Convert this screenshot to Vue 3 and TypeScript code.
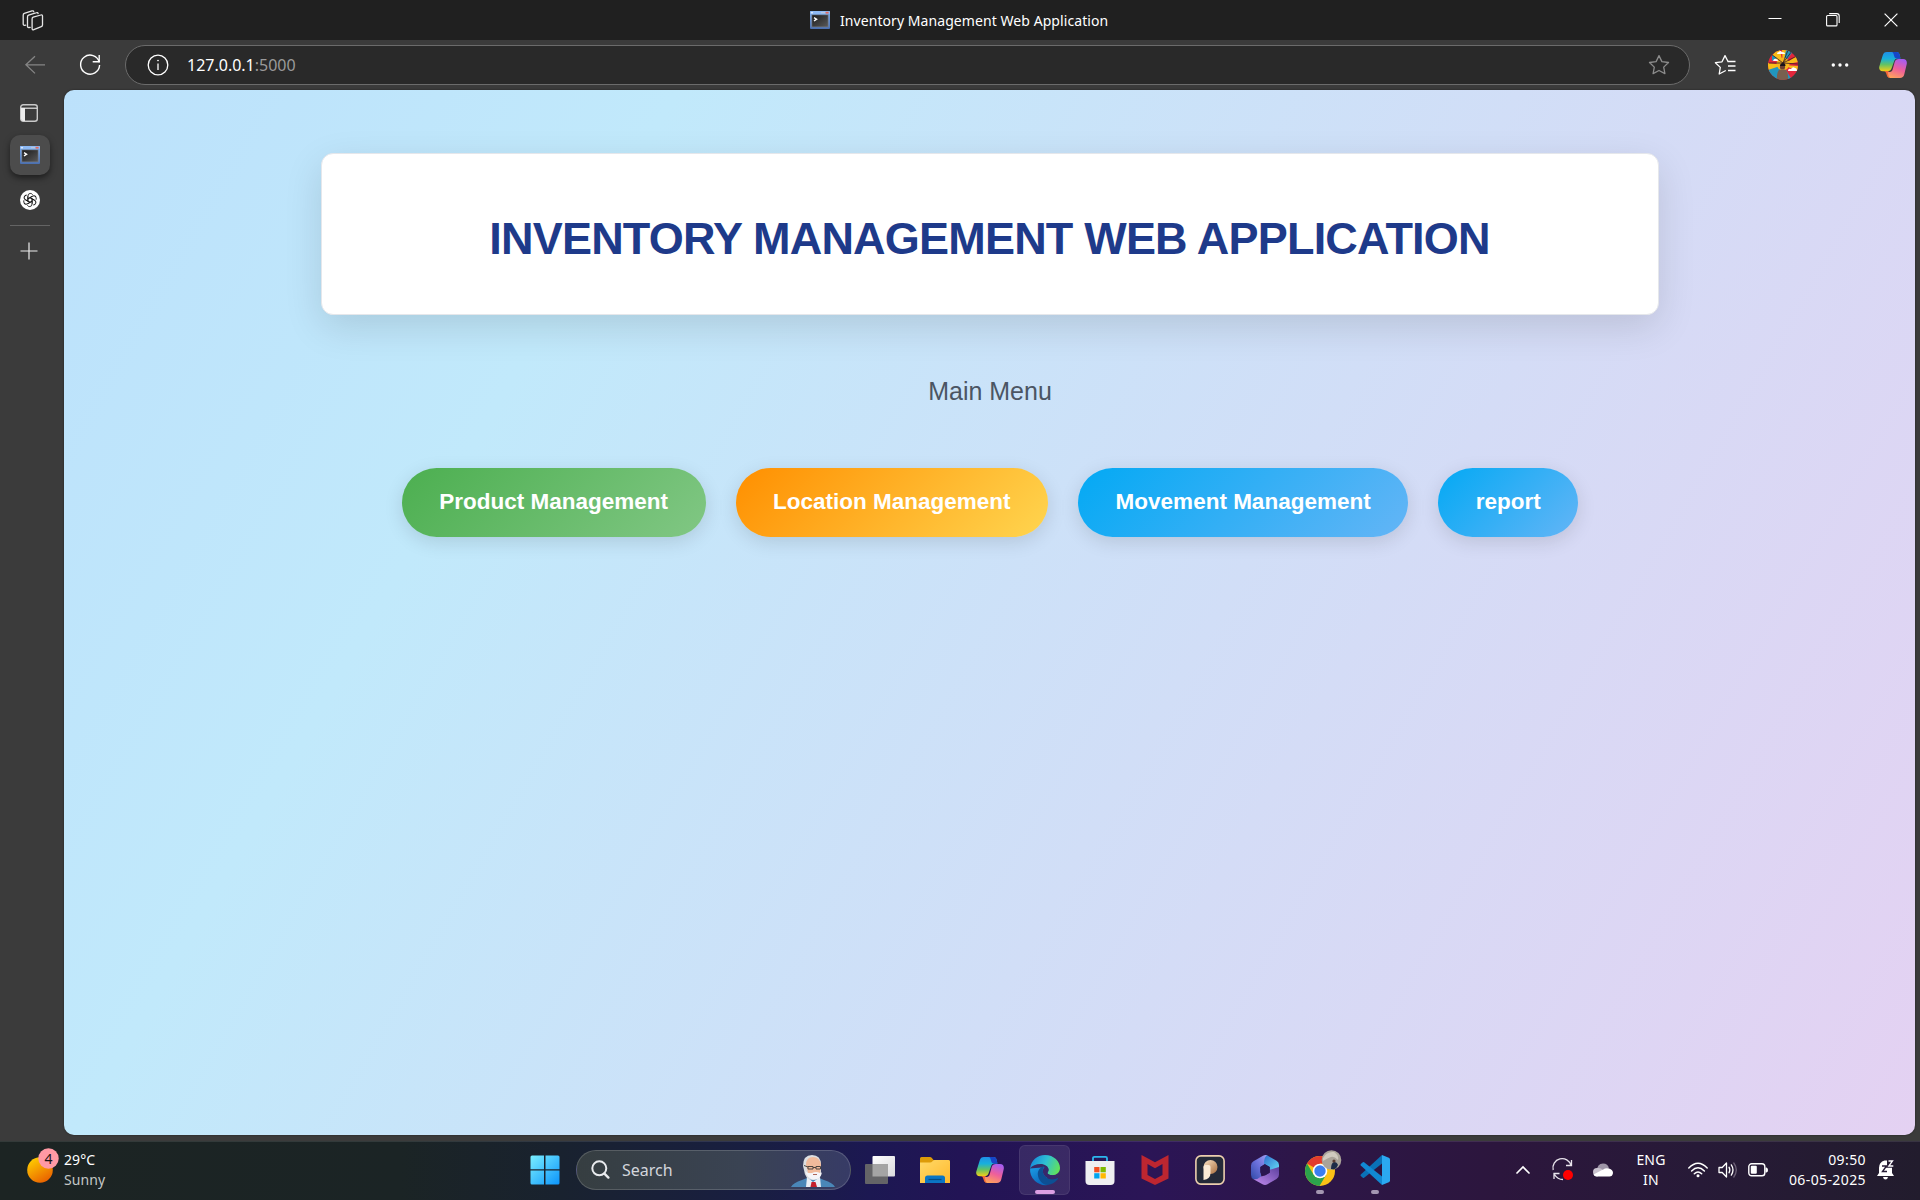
<script setup lang="ts">
interface MenuItem {
  label: string
  tone: string
}

const menu: MenuItem[] = [
  { label: 'Product Management', tone: 'green' },
  { label: 'Location Management', tone: 'orange' },
  { label: 'Movement Management', tone: 'blue' },
  { label: 'report', tone: 'blue' },
]
</script>

<template>
  <div class="desktop">
    <svg class="defs" width="0" height="0" aria-hidden="true">
      <defs>
        <linearGradient id="copA" x1="0" y1="0" x2="0" y2="1">
          <stop offset="0" stop-color="#1f8fe8" /><stop offset=".35" stop-color="#18b0dc" />
          <stop offset=".65" stop-color="#62c266" /><stop offset="1" stop-color="#f4cf16" />
        </linearGradient>
        <linearGradient id="copB" x1=".7" y1="0" x2=".3" y2="1">
          <stop offset="0" stop-color="#a65cf0" /><stop offset=".5" stop-color="#ee5f9b" />
          <stop offset="1" stop-color="#ffa35c" />
        </linearGradient>
        <linearGradient id="winFrame" x1="0" y1="0" x2="0" y2="1">
          <stop offset="0" stop-color="#7fb0ee" /><stop offset="1" stop-color="#4a6fb0" />
        </linearGradient>
        <linearGradient id="winBody" x1="0" y1="0" x2="1" y2="1">
          <stop offset="0" stop-color="#1c1c1c" /><stop offset="1" stop-color="#585858" />
        </linearGradient>
        <symbol id="console" viewBox="0 0 20 18">
          <rect width="20" height="18" rx="1" fill="url(#winFrame)" />
          <rect x="0" y="0" width="20" height="3" rx="1" fill="#8db9f4" />
          <rect x="1" y="1" width="2" height="1.4" fill="#dbe9fb" />
          <rect x="11" y="1" width="4" height="1.2" fill="#b9c6dd" />
          <rect x="15.6" y=".8" width="3" height="1.8" fill="#e2695c" />
          <rect x="1.5" y="3.6" width="17" height="12.6" fill="#777c85" />
          <rect x="2.2" y="4.2" width="15.6" height="11.4" fill="url(#winBody)" />
          <path d="M4 6.6l2.6 1.6L4 10" fill="none" stroke="#fff" stroke-width="1.4" />
        </symbol>
        <symbol id="copilot" viewBox="0 0 28 26">
          <path d="M8 0h9.500c2 0 2.700 1 3.200 3l.7 3.500h-3.200c-1.700 0-2.500.9-3 2.500L12.700 16c-.8 2.200-2 3.200-4.500 3.200H4C.8 19.200-.3 17 .3 14.500L3.700 3.500C4.500 1 5.500 0 8 0z" fill="url(#copA)" />
          <path d="M12.500 0h5c2 0 2.700 1 3.200 3l.8 3.600h-3.300c-2.300 0-2.700-1-3.200-3C14.700 1.600 14 .2 12.500 0z" fill="#1746c8" />
          <path d="M20 7h4c3.200 0 4.300 2.400 3.700 5.200l-2.400 10c-.6 2.500-2 3.800-4.500 3.800h-9.500c-1.800 0-2.500-1-3-2.500L7.500 20h3.200c1.700 0 2.500-1 3-2.700l2-7.300C16.300 8 17.500 7 20 7z" fill="url(#copB)" />
          <path d="M5 19h5.500c-1.300.3-1.700 1.400-1.400 2.900.4 2.200 1 3.800 2.600 4.100-2.200 0-3.400-1-4-3-.5-2-1-3.600-2.700-4z" fill="#f56a35" />
        </symbol>
      </defs>
    </svg>

    <header class="titlebar">
      <svg class="spaces" width="22" height="22" viewBox="0 0 22 22" fill="none" stroke="#e6e6e6" stroke-width="1.300" stroke-linejoin="round" stroke-linecap="round">
        <path d="M11.200 7.200l7.700-2.200c1-.3 1.600.1 1.600 1.100v9c0 .9-.3 1.300-1.200 1.600l-7.500 3c-1 .4-1.700-.1-1.700-1.100V9c0-1 .2-1.500 1.100-1.800z" />
        <path d="M8.200 17.300l-1.200.2c-1 .2-1.500-.3-1.500-1.300V7c0-1 .2-1.500 1.100-1.800L14.500 2.700c.8-.3 1.400 0 1.600.8" />
        <path d="M3.700 15.200l-1 .1c-1 .1-1.500-.4-1.500-1.300V5.200c0-.9.200-1.500 1.100-1.800L10 .9c.9-.3 1.500 0 1.700.8" />
      </svg>
      <div class="tabtitle">
        <svg width="20" height="18"><use href="#console" /></svg>
        <span>Inventory Management Web Application</span>
      </div>
      <div class="winctl">
        <svg width="14" height="14" viewBox="0 0 14 14" stroke="#fff" fill="none"><path d="M.5 5.500h13" /></svg>
        <svg width="14" height="14" viewBox="0 0 14 14" stroke="#fff" stroke-width="1.100" fill="none"><rect x=".6" y="2.500" width="10.400" height="10.400" rx="1" /><path d="M3.200 .6h7.600c1.600 0 2.400.8 2.400 2.400v7" /></svg>
        <svg width="14" height="14" viewBox="0 0 14 14" stroke="#fff" stroke-width="1.200"><path d="M.6.600l12.800 12.800M13.400.600L.600 13.400" /></svg>
      </div>
    </header>

    <div class="toolbar">
      <svg class="back" width="20" height="20" viewBox="0 0 20 20" stroke="#858585" stroke-width="1.300" fill="none"><path d="M20 9.800H.9M10 1.200L.9 9.800l9.100 8.600" /></svg>
      <svg class="reload" width="22" height="22" viewBox="0 0 22 22" stroke="#fff" stroke-width="1.400" fill="none"><path d="M20.300 8.200A9.500 9.500 0 1 0 20.600 11" /><path d="M20.200 1v6.700h-6.500" /></svg>
      <div class="address">
        <svg width="22" height="22" viewBox="0 0 22 22" stroke="#fff" stroke-width="1.300" fill="none"><circle cx="11" cy="11" r="9.800" /><path d="M11 9.500v6.500" /><circle cx="11" cy="6.600" r=".5" fill="#fff" stroke-width=".8" /></svg>
        <span class="url"><b>127.0.0.1</b>:5000</span>
        <svg class="star" width="22" height="22" viewBox="0 0 22 22" stroke="#8c8c8c" stroke-width="1.300" fill="none" stroke-linejoin="round"><path d="M11 1.600l2.900 6 6.600.9-4.800 4.600 1.200 6.500L11 16.500l-5.900 3.100 1.200-6.500L1.500 8.500l6.600-.9z" /></svg>
      </div>
      <div class="tools">
        <svg width="22" height="22" viewBox="0 0 22 22" stroke="#fff" stroke-width="1.300" fill="none" stroke-linejoin="round"><path d="M11.800 16.500L5.200 20l1.100-6.600L1.400 8.700l6.600-.9 3-6.200 3 5.900" /><path d="M13.500 7.500h8M14 12h7.500M14 16.500h7.500" /></svg>
        <svg width="30" height="30" viewBox="0 0 30 30">
          <clipPath id="av"><circle cx="15" cy="15" r="15" /></clipPath>
          <g clip-path="url(#av)">
            <rect width="30" height="30" fill="#e2263c" />
            <path d="M15 15L4 6l4-6h4zM15 15L14 0h6zM15 15L30 5v7zM15 15L0 13v9zM15 15l15 1v5z" fill="#f8bd18" />
            <path d="M15 15L18 0h8zM15 15L0 20v10h9zM15 15l9 15h-4z" fill="#2196bf" />
            <path d="M4 5l5 3-5 3z" fill="#2196bf" />
            <circle cx="15" cy="14" r="6.500" fill="#f6b61d" />
            <path d="M15 13L3 4M15 13L20 0M15 13L24 1M15 13l14-7M15 13L1 13M15 13l15 1" stroke="#361c25" stroke-width=".8" />
            <path d="M9 4q0-2 2-2 1-2 3 0 3 0 3 2zM20 21q0-3 3-2 2-3 4-1 2 0 2 3zM5 11q1-3 3-2 2 0 2 2z" fill="#fff" />
            <circle cx="14.500" cy="17" r="2.600" fill="#6e4030" /><path d="M12 16q0-3 3-3 2.500 0 2.500 3z" fill="#17121a" />
            <path d="M9 30q-.5-9 3-10.500h5q3.500 1.500 3 10.500z" fill="#79604f" />
          </g>
        </svg>
        <svg width="18" height="6" viewBox="0 0 18 6" fill="#fff"><circle cx="2.300" cy="3" r="1.700" /><circle cx="9" cy="3" r="1.700" /><circle cx="15.700" cy="3" r="1.700" /></svg>
        <svg width="28" height="26"><use href="#copilot" /></svg>
      </div>
    </div>

    <div class="body">
      <aside class="side">
        <svg width="18" height="18" viewBox="0 0 18 18" class="panes"><rect x=".7" y=".7" width="16.600" height="16.600" rx="2.500" fill="none" stroke="#c9c9c9" stroke-width="1.400" /><path d="M1 4.200h16" stroke="#e6e6e6" stroke-width="1.200" /><path d="M1 4h4v13H3q-2 0-2-2z" fill="#ececec" /></svg>
        <div class="active"><svg width="20" height="18"><use href="#console" /></svg></div>
        <svg class="gpt" width="20" height="20" viewBox="0 0 20 20">
          <circle cx="10" cy="10" r="10" fill="#fff" />
          <g fill="none" stroke="#151515" stroke-width=".9" stroke-linejoin="round">
            <path v-for="n in 6" :key="n" :transform="`rotate(${n * 60} 10 10)`" d="M7.900 11.200V6.200q0-2.600 2.300-2.800 1.600 0 2.500 1.300M7.900 8.800L12.200 6.300" />
          </g>
        </svg>
        <div class="rule"></div>
        <svg class="plus" width="18" height="18" viewBox="0 0 18 18" stroke="#ededed" stroke-width="1.200"><path d="M9 .5v17M.5 9h17" /></svg>
      </aside>

      <main class="page">
        <section class="card"><h1>INVENTORY MANAGEMENT WEB APPLICATION</h1></section>
        <p class="sub">Main Menu</p>
        <nav class="menu">
          <a v-for="m in menu" :key="m.label" :class="['btn', m.tone]">{{ m.label }}</a>
        </nav>
      </main>
    </div>

    <footer class="taskbar">
      <div class="weather">
        <svg width="34" height="36" viewBox="0 0 34 36">
          <defs><linearGradient id="sun" x1=".2" y1="0" x2=".8" y2="1"><stop offset="0" stop-color="#ffd000" /><stop offset="1" stop-color="#e85a00" /></linearGradient></defs>
          <circle cx="14" cy="22" r="12.800" fill="url(#sun)" />
          <circle cx="22.500" cy="10.500" r="10.200" fill="#ff99a4" />
          <text x="22.500" y="15.600" text-anchor="middle" font-family="Noto Sans, sans-serif" font-size="14" fill="#1a1414">4</text>
        </svg>
        <div class="wtext"><span>29°C</span><span class="dim">Sunny</span></div>
      </div>

      <div class="apps">
        <div class="cell">
          <svg width="30" height="30" viewBox="0 0 30 30">
            <defs><linearGradient id="win" x1="0" y1="0" x2="30" y2="30" gradientUnits="userSpaceOnUse"><stop offset="0" stop-color="#7cf0ff" /><stop offset="1" stop-color="#0a93fb" /></linearGradient></defs>
            <path d="M2 .5h12v13.700H.500V2Q.500.500 2 .500zM15.500.500H28q1.500 0 1.500 1.500v12.200h-14zM.500 15.600H14v13.900H2Q.500 29.500.500 28zM15.500 15.600h14V28q0 1.500-1.500 1.500H15.500z" fill="url(#win)" />
          </svg>
        </div>
        <div class="search">
          <svg width="20" height="20" viewBox="0 0 20 20" fill="none" stroke="#e9ebee" stroke-width="2" stroke-linecap="round"><circle cx="8.300" cy="8.300" r="7" /><path d="M13.400 13.600l4 4" stroke-width="2.400" /></svg>
          <span>Search</span>
          <svg class="man" width="44" height="34" viewBox="0 0 44 34">
            <path d="M0 33q2-4 11-7l5-2h12l5 2q9 3 11 7z" fill="#4a87b8" />
            <path d="M16 23l6 5 7-5 1 10H15z" fill="#e9eef5" /><path d="M20.500 28h4l1.500 5h-6.500z" fill="#c5202c" />
            <path d="M12 12Q12 1 21 1t9 10v8q0 7-8 7t-9-10z" fill="#dcdfe2" />
            <path d="M15 11q0-8 7-8t8 8l-1 8h-12z" fill="#f0ba9b" />
            <path d="M14 17q3 3 7 2 4-2 8 0 2 0 2-1-1 7.500-8 7.500-6 0-9-8.500z" fill="#f6f5f8" />
            <path d="M17 12.500h5v2.500h-5zM25 12.500h4.500v2.500H25zM13 11.500l4 1.500M22 13.500h3" fill="none" stroke="#4b4440" stroke-width="1" /><path d="M22 20.500h4" stroke="#ad6658" />
          </svg>
        </div>
        <div class="cell">
          <svg width="32" height="30" viewBox="0 0 32 30">
            <defs><linearGradient id="tv" x1="0" y1="0" x2="1" y2="1"><stop offset="0" stop-color="#fff" /><stop offset="1" stop-color="#d9d9dc" /></linearGradient></defs>
            <rect x="8.500" y="1" width="22.500" height="20.500" rx="1" fill="url(#tv)" /><rect x="1" y="9" width="23" height="20" rx="1" fill="#646467" /><rect x="8.500" y="9" width="15.500" height="12.500" fill="#a4a4a4" />
          </svg>
        </div>
        <div class="cell">
          <svg width="30" height="30" viewBox="0 0 30 30">
            <defs><linearGradient id="fold" x1="0" y1="0" x2="1" y2="1"><stop offset="0" stop-color="#ffd968" /><stop offset="1" stop-color="#ffb92d" /></linearGradient></defs>
            <path d="M0 3.500Q0 2 1.500 2H10q1 0 1.700.8L13.500 5H28.500Q30 5 30 6.500V12H0z" fill="#dd9b08" />
            <path d="M0 7.500h10q1.500 0 2.500-1.200T15 5h13.500Q30 5 30 6.500V28H0z" fill="url(#fold)" />
            <path d="M5 28v-5q0-2.500 2.500-2.500h15q2.500 0 2.500 2.500v5z" fill="#0b75c4" /><path d="M8.500 24.500h13" stroke="#064d85" stroke-width="1.200" />
          </svg>
        </div>
        <div class="cell"><svg width="28" height="26"><use href="#copilot" /></svg></div>
        <div class="cell current">
          <svg width="30" height="30" viewBox="0 0 30 30">
            <defs>
              <linearGradient id="edA" x1="0" y1=".3" x2="1" y2=".6"><stop offset="0" stop-color="#1689dc" /><stop offset=".5" stop-color="#2fc0d2" /><stop offset="1" stop-color="#62e25a" /></linearGradient>
              <linearGradient id="edB" x1="0" y1="0" x2=".6" y2="1"><stop offset="0" stop-color="#1c9de6" /><stop offset="1" stop-color="#0b66b9" /></linearGradient>
            </defs>
            <path d="M.1 13.500Q-.5 21 5 26q5.500 5 12.500 4V12z" fill="url(#edB)" />
            <path d="M.1 13.500C1 5.500 7 0 15 0c9 0 15 6.500 15 13 0 4.500-3.500 7.200-7.500 7.200-3.300 0-5-1-5-2.200 0-.8 1-1.300 1-3.300 0-3-3.500-5.700-8-5.700-4.700 0-8.500 1.700-10.400 4.500z" fill="url(#edA)" />
            <path d="M14.500 11C10 12 7.500 16 7.800 19.500 8.200 25 12.500 29.500 17.500 30c4.500-.5 8.500-3 10.500-6.300.3-.6-.2-.9-.7-.6-5.500 2.800-13 .5-14.300-5.600-.4-2.300-.2-4.300 1.500-6.500z" fill="#0d4f93" />
            <path d="M17.500 18c0-.8 1-1.300 1-3.300 0-1.300-.7-2.500-1.800-3.500-2.700.3-4.200 2.800-3.700 6.300 1.300 5.500 8.800 8.400 14.300 5.600q-1-2-2.300-3.200-1.200.3-2.500.3c-3.300 0-5-1-5-2.200z" fill="#38276b" />
          </svg>
          <i class="bar wide"></i>
        </div>
        <div class="cell">
          <svg width="30" height="30" viewBox="0 0 30 30">
            <path d="M8 6.500V3.200Q8 1.800 9.400 1.800h11.200Q22 1.800 22 3.200v3.300" fill="none" stroke="#2cb7ee" stroke-width="1.800" />
            <path d="M.5 6h29v20q0 4-4 4h-21q-4 0-4-4z" fill="#efeff1" />
            <rect x="9.200" y="12" width="5.300" height="5.300" fill="#f25022" /><rect x="15.500" y="12" width="5.300" height="5.300" fill="#7fba00" /><rect x="9.200" y="18.200" width="5.300" height="5.300" fill="#00a4ef" /><rect x="15.500" y="18.200" width="5.300" height="5.300" fill="#ffb900" />
          </svg>
        </div>
        <div class="cell"><svg width="28" height="30" viewBox="0 0 28 30"><path d="M.500 0L14 7.300 27.500 0v23.500L14 30 .500 23.500zM6.500 9v11L14 24l7.500-4V9L14 13.300z" fill="#bd2630" fill-rule="evenodd" /></svg></div>
        <div class="cell">
          <svg width="30" height="30" viewBox="0 0 30 30">
            <defs><linearGradient id="pg" x1="0" y1="0" x2="1" y2="1"><stop offset="0" stop-color="#fbe4c5" /><stop offset="1" stop-color="#a96e3d" /></linearGradient></defs>
            <rect x=".9" y=".9" width="28.200" height="28.200" rx="5" fill="#242a38" stroke="#eccfae" stroke-width="1.600" />
            <circle cx="15.500" cy="12" r="7" fill="url(#pg)" /><path d="M8.500 25V12q0-2 2-2h3q2 0 2 2v6q0 6-7 7z" fill="#fbebd5" />
          </svg>
        </div>
        <div class="cell">
          <svg width="28" height="30" viewBox="0 0 28 30">
            <defs>
              <linearGradient id="mA" x1="1" y1="0" x2="0" y2="1"><stop offset="0" stop-color="#a5a2f2" /><stop offset=".5" stop-color="#6a6fdb" /><stop offset="1" stop-color="#2f4aa6" /></linearGradient>
              <linearGradient id="mB" x1="0" y1="0" x2="1" y2="1"><stop offset="0" stop-color="#2f6fd0" /><stop offset="1" stop-color="#66def5" /></linearGradient>
              <linearGradient id="mC" x1="1" y1="0" x2="0" y2="1"><stop offset="0" stop-color="#5c3f9e" /><stop offset="1" stop-color="#c48df0" /></linearGradient>
            </defs>
            <path d="M16 .3q-2-.6-4 .5L2.500 6.300Q0 7.800 0 10.500v9.500q0 3 2.500 4.300 5 1.200 8-2.300l-1-4.500V12L18 6z" fill="url(#mA)" />
            <path d="M16 .3l9.500 5.500Q28 7.300 28 10v6.500l-9.300-1.500v-3L13 8.800Q13 2 16 .3z" fill="url(#mB)" />
            <path d="M28 12v7.500q0 3-2.500 4.500L16.500 29.200q-2.500 1.400-5 0L2.500 24.200Q7 24.500 10 21.500l4-1 4.700-2.700v-3z" fill="url(#mC)" />
            <path d="M14 9.300l4.700 2.700v5.500L14 20.300l-4.700-2.800V12z" fill="#2a1650" />
          </svg>
        </div>
        <div class="cell">
          <svg width="38" height="38" viewBox="0 0 38 38">
            <circle cx="19" cy="20" r="15" fill="#fbc116" />
            <path d="M19 20L6 12.500A15 15 0 0 1 32 12.500H19z" fill="#e33b2e" />
            <path d="M6 12.500A15 15 0 0 0 18.500 35L25 24l-6-4-6.500 3.500z" fill="#2ba24c" />
            <circle cx="19" cy="20" r="7.300" fill="#fff" /><circle cx="19" cy="20" r="5.700" fill="#3b7ef0" />
            <circle cx="30.500" cy="9" r="9.800" fill="#aaa399" /><path d="M22 7q4-7 11-6 5 3 4 8-4-4-7-3t-8 4z" fill="#d0cabf" /><path d="M30 18q0-6 3-7 3 0 4 3-1 3-4 4.500z" fill="#1d2b47" /><circle cx="33" cy="10" r="1.600" fill="#5b3b30" />
          </svg>
          <i class="bar"></i>
        </div>
        <div class="cell">
          <svg width="30" height="30" viewBox="0 0 30 30">
            <path d="M22 0L.8 19.500q-.7.700 0 1.400l2 1.900q.6.500 1.300 0L22 8.500z" fill="#0a72b8" />
            <path d="M22 30L.8 10.500q-.7-.7 0-1.400l2-1.900q.6-.5 1.300 0L22 21.500z" fill="#1189d3" />
            <path d="M22 0l6.800 2.800Q30 3.300 30 4.600v20.800q0 1.300-1.200 1.800L22 30z" fill="#2ba9f1" />
          </svg>
          <i class="bar"></i>
        </div>
      </div>

      <div class="tray">
        <div class="t40"><svg width="14" height="8" viewBox="0 0 14 8" fill="none" stroke="#fff" stroke-width="1.700" stroke-linecap="round"><path d="M1 7l6-6 6 6" /></svg></div>
        <div class="t40">
          <svg width="22" height="22" viewBox="0 0 22 22" fill="none" stroke="#e8e4ec" stroke-width="1.300"><path d="M1.200 11A9 9 0 0 1 19 6.500M19.500 1v5.500H14M2 20v-5.500h5.500M2.500 15.500q3 5 8.500 5" /><circle cx="16" cy="16" r="5" fill="#f00" stroke="none" /></svg>
        </div>
        <div class="t40"><svg width="20" height="14" viewBox="0 0 20 14"><path d="M4 8Q4 .500 10 .500q5 0 6 5z" fill="#9f96a8" /><path d="M4.500 13.500Q0 13 0 9q0-4 4-4 4-.5 6 2z" fill="#c9c3ce" /><path d="M3 13.500q-2-.5-2.500-2L10 6.500q3-2 6-1 4 1 4 4.500-.5 3.500-3.500 3.500z" fill="#fff" /></svg></div>
        <div class="lang"><span>ENG</span><span>IN</span></div>
        <div class="status">
          <svg width="20" height="16" viewBox="0 0 20 16" fill="none" stroke="#fff" stroke-width="1.500" stroke-linecap="round"><path d="M.8 6q9.200-9.500 18.400 0M3.600 9q6.400-6.500 12.800 0M6.300 11.800q3.700-3.700 7.400 0" /><circle cx="10" cy="13.700" r="1.500" fill="#fff" stroke="none" /></svg>
          <svg width="20" height="18" viewBox="0 0 20 18" fill="none" stroke="#fff" stroke-width="1.300" stroke-linejoin="round" stroke-linecap="round"><path d="M1 6.500h3.200L8.500 2v14l-4.300-4.500H1zM11 6.200q1.700 2.800 0 5.600M13.300 3.900q3.400 5.100 0 10.200" /><path d="M15.800 2q5 7 0 14" stroke="#6c6076" /></svg>
          <svg width="20" height="14" viewBox="0 0 20 14"><rect x=".8" y=".8" width="16" height="12" rx="2.800" fill="none" stroke="#fff" stroke-width="1.400" /><rect x="2.800" y="2.800" width="6" height="8" rx="1" fill="#fff" /><path d="M17.500 4.500h1q1.500.5 1.500 2.500t-1.500 2.500h-1z" fill="#fff" /></svg>
        </div>
        <div class="clock"><span>09:50</span><span>06-05-2025</span></div>
        <svg class="bell" width="18" height="20" viewBox="0 0 18 20"><path d="M0 16l2-3V8q0-6 5.500-7.500H10V5h5v8l2 3z" fill="#fff" /><path d="M6 17h5q-.5 2.500-2.500 2.500T6 17z" fill="#fff" /><path d="M5 6h4.500L5.500 11.500H10" fill="none" stroke="#261b35" stroke-width="1.400" /><path d="M11.500 1h4l-3.700 5H16" fill="none" stroke="#261b35" stroke-width="3.400" /><path d="M11.500 1h4l-3.700 5H16.300" fill="none" stroke="#fff" stroke-width="1.300" /></svg>
      </div>
    </footer>
  </div>
</template>

<style>
body { background: #3b3b3b; overflow: hidden; }
</style>

<style scoped>
.desktop { width: 1920px; height: 1200px; display: flex; flex-direction: column; background: #3b3b3b; font-family: 'Noto Sans', sans-serif; overflow: hidden; }
.defs { position: absolute; }
svg { display: block; flex: none; overflow: visible; }
.titlebar { height: 40px; background: #202020; display: flex; align-items: center; color: #fff; flex: none; }
.spaces { margin-left: 22px; margin-top: 1px; }
.tabtitle { display: flex; align-items: center; gap: 10px; margin-left: 766px; font-size: 14px; letter-spacing: .07px; white-space: nowrap; width: 300px; }
.winctl { display: flex; margin-left: auto; gap: 44px; margin-right: 22px; }
.toolbar { height: 50px; display: flex; align-items: center; flex: none; }
.back { margin-left: 25px; }
.reload { margin-left: 34px; }
.address { box-sizing: border-box; margin-left: 24px; width: 1565px; height: 40px; border: 1px solid #6b6b6b; border-radius: 20px; background: #292929; display: flex; align-items: center; padding: 0 19px 0 21px; }
.url { margin-left: 18px; font-size: 16px; color: #9a9a9a; letter-spacing: 0; }
.url b { font-weight: 400; color: #fff; }
.star { margin-left: auto; }
.tools { display: flex; align-items: center; margin-left: 24px; }
.tools svg:nth-child(2) { margin-left: 32px; }
.tools svg:nth-child(3) { margin-left: 33px; }
.tools svg:nth-child(4) { margin-left: 30px; }
.body { display: flex; height: 1051px; flex: none; }
.side { width: 64px; display: flex; flex-direction: column; align-items: center; box-sizing: border-box; padding: 14px 6px 0 0; }
.active { width: 40px; height: 40px; border-radius: 10px; background: #4c4c4c; box-shadow: 0 3px 6px rgba(0, 0, 0, .5); display: flex; align-items: center; justify-content: center; margin: 13px 0 15px 2px; }
.gpt { margin-left: 2px; }
.rule { width: 40px; height: 1px; background: #646464; margin: 15px 0 16px 2px; }
.page { width: 1851px; height: 1045px; box-sizing: border-box; border-radius: 10px; padding-top: 63px; background: linear-gradient(120deg, #bce1fb 0%, #c1e9fb 25%, #e4d1f2 100%); display: flex; flex-direction: column; align-items: center; font-family: 'Liberation Sans', Arial, sans-serif; box-shadow: 0 0 2px rgba(0, 0, 0, .5); }
.card { box-sizing: border-box; width: 1338px; height: 162px; border: 1px solid #e5e7eb; border-radius: 12px; background: #fff; box-shadow: 0 12px 38px rgba(0, 0, 0, .12); display: flex; align-items: center; justify-content: center; }
h1 { margin: 10px 0 0; font-size: 45px; line-height: 50px; font-weight: 700; letter-spacing: -.8px; color: #1e3a8a; white-space: nowrap; }
.sub { margin: 59px 0 0 1px; font-size: 25px; line-height: 35px; color: #4b5563; }
.menu { display: flex; gap: 30px; margin: 59px 0 0 1px; }
.btn { height: 69px; box-sizing: border-box; padding: 0 37.500px; border-radius: 35px; font-size: 22.500px; line-height: 67px; font-weight: 700; color: #fff; box-shadow: 0 5px 19px rgba(0, 0, 0, .12); white-space: nowrap; }
.green { background: linear-gradient(135deg, #4caf50, #81c784); }
.orange { background: linear-gradient(135deg, #ff8f00, #ffd54f); }
.blue { background: linear-gradient(135deg, #03a9f4, #64b5f6); }
.taskbar { box-sizing: border-box; height: 59px; flex: none; display: flex; align-items: center; color: #fff; font-size: 14px; padding-bottom: 1px; box-shadow: inset 0 1px rgba(255, 255, 255, .1); background: linear-gradient(90deg, #1c2423 0, #1b2425 400px, #19222f 560px, #191e42 760px, #1c1852 870px, #221455 960px, #2b1556 1150px, #2d1648 1300px, #2c163d 1500px, #271a37 1700px, #221c2d 1920px); }
.weather { display: flex; align-items: center; width: 517px; box-sizing: border-box; padding-left: 26px; gap: 4px; }
.weather > svg { margin-top: -8px; }
.wtext { display: flex; flex-direction: column; line-height: 20px; letter-spacing: .1px; }
.dim { color: #c3c7c6; }
.apps { display: flex; align-items: center; }
.cell { width: 55px; height: 50px; display: flex; align-items: center; justify-content: center; position: relative; }
.current::before { content: ''; position: absolute; inset: 0 2px; border-radius: 6px; background: rgba(255, 255, 255, .09); border: 1px solid rgba(255, 255, 255, .07); box-sizing: border-box; }
.current svg { position: relative; }
.bar { position: absolute; bottom: 1px; width: 8px; height: 4px; border-radius: 2px; background: #a497b2; }
.wide { width: 20px; background: #dc9fe3; }
.search { box-sizing: border-box; width: 275px; height: 40px; margin: 0 1px 0 4px; border-radius: 20px; border: 1px solid rgba(255, 255, 255, .16); background: linear-gradient(90deg, #363e41, #3a4353 60%, #373b66); display: flex; align-items: center; padding: 0 15px 0 14px; }
.search span { margin-left: 11px; font-size: 16px; color: #d3d6dc; }
.man { margin-left: auto; margin-top: 1px; }
.tray { margin-left: auto; display: flex; align-items: center; margin-right: 25px; }
.t40 { width: 40px; display: flex; justify-content: center; }
.lang { width: 56px; display: flex; flex-direction: column; align-items: center; line-height: 20px; font-size: 14px; letter-spacing: .2px; }
.status { display: flex; align-items: center; gap: 10px; margin-left: 9px; }
.clock { width: 98px; display: flex; flex-direction: column; align-items: flex-end; line-height: 20px; letter-spacing: .4px; }
.bell { margin-left: 11px; }
</style>
